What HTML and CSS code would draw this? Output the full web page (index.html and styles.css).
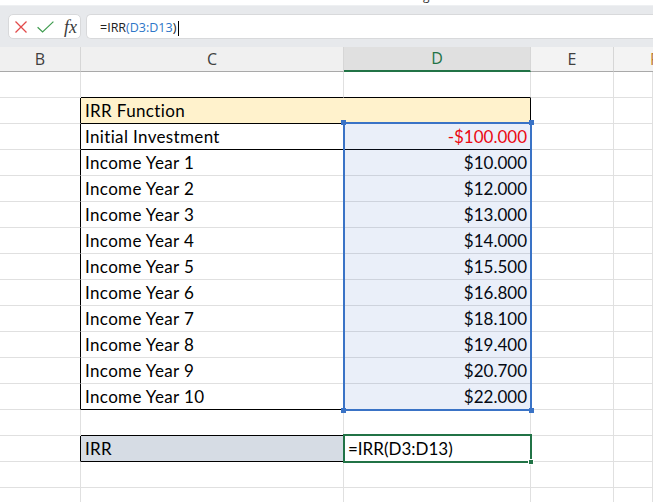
FILE: index.html
```html
<!DOCTYPE html>
<html>
<head>
<meta charset="utf-8">
<link rel="stylesheet" href="styles.css">
</head>
<body>
<div class="top"><span class="top-glyph">g</span></div>
<div class="toolbar">
  <div class="fxbox">
    <svg class="ic-x" width="12" height="12" viewBox="0 0 12 12"><path d="M0.5 0.5 L11.5 11.5 M11.5 0.5 L0.5 11.5" stroke="#e24a4a" stroke-width="1.3" fill="none"/></svg>
    <svg class="ic-ok" width="17" height="12" viewBox="0 0 17 12"><path d="M0.6 6.2 L5.6 11 L16.4 0.6" stroke="#3f9c4f" stroke-width="1.2" fill="none"/></svg>
    <span class="fx">fx</span>
  </div>
  <div class="formula"><span>=IRR</span><span class="ref">(D3:D13</span><span>)</span><span class="caret"></span></div>
</div>
<div class="colheads">
  <div class="h">B</div>
  <div class="h">C</div>
  <div class="h sel-h">D</div>
  <div class="h light">E</div>
  <div class="h light fcol">F</div>
</div>
<div class="sheet">
  <!-- row 1 -->
  <div class="c"></div><div class="c bk-b"></div><div class="c bk-b"></div><div class="c"></div><div class="c"></div>
  <!-- row 2 -->
  <div class="c bk-r"></div><div class="c lbl title bk-b bk-r">IRR Function</div><div class="c"></div><div class="c"></div>
  <!-- row 3 -->
  <div class="c bk-r"></div><div class="c lbl bk-b">Initial Investment</div><div class="c num neg bk-b bk-r">-$100.000</div><div class="c"></div><div class="c"></div>
  <!-- rows 4-12 -->
  <div class="c bk-r"></div><div class="c lbl">Income Year 1</div><div class="c num bk-r">$10.000</div><div class="c"></div><div class="c"></div>
  <div class="c bk-r"></div><div class="c lbl">Income Year 2</div><div class="c num bk-r">$12.000</div><div class="c"></div><div class="c"></div>
  <div class="c bk-r"></div><div class="c lbl">Income Year 3</div><div class="c num bk-r">$13.000</div><div class="c"></div><div class="c"></div>
  <div class="c bk-r"></div><div class="c lbl">Income Year 4</div><div class="c num bk-r">$14.000</div><div class="c"></div><div class="c"></div>
  <div class="c bk-r"></div><div class="c lbl">Income Year 5</div><div class="c num bk-r">$15.500</div><div class="c"></div><div class="c"></div>
  <div class="c bk-r"></div><div class="c lbl">Income Year 6</div><div class="c num bk-r">$16.800</div><div class="c"></div><div class="c"></div>
  <div class="c bk-r"></div><div class="c lbl">Income Year 7</div><div class="c num bk-r">$18.100</div><div class="c"></div><div class="c"></div>
  <div class="c bk-r"></div><div class="c lbl">Income Year 8</div><div class="c num bk-r">$19.400</div><div class="c"></div><div class="c"></div>
  <div class="c bk-r"></div><div class="c lbl">Income Year 9</div><div class="c num bk-r">$20.700</div><div class="c"></div><div class="c"></div>
  <!-- row 13 -->
  <div class="c bk-r"></div><div class="c lbl bk-b">Income Year 10</div><div class="c num bk-b bk-r">$22.000</div><div class="c"></div><div class="c"></div>
  <!-- row 14 -->
  <div class="c"></div><div class="c bk-b"></div><div class="c"></div><div class="c"></div><div class="c"></div>
  <!-- row 15 -->
  <div class="c bk-r"></div><div class="c lbl irr bk-b">IRR</div><div class="c">=IRR(D3:D13)</div><div class="c"></div><div class="c"></div>
  <!-- row 16-17 -->
  <div class="c"></div><div class="c"></div><div class="c"></div><div class="c"></div><div class="c"></div>
  <div class="c"></div><div class="c"></div><div class="c"></div><div class="c"></div><div class="c"></div>

  <div class="range">
    <span class="hd tl"></span><span class="hd tr"></span><span class="hd bl"></span><span class="hd br"></span>
  </div>
  <div class="active"><span class="fill-handle"></span></div>
</div>
</body>
</html>
```
FILE: styles.css
```css
html, body {
  margin: 0;
  padding: 0;
}
body {
  width: 653px;
  height: 502px;
  overflow: hidden;
  background: #ffffff;
  font-family: Lato, "Liberation Sans", sans-serif;
}
.top {
  height: 5px;
  overflow: hidden;
  padding-left: 423px;
  background: #ffffff;
}
.top-glyph {
  display: block;
  font-family: "Open Sans", sans-serif;
  font-size: 12px;
  line-height: 12px;
  margin-top: -10px;
  color: #333;
}
.toolbar {
  height: 42px;
  box-sizing: border-box;
  background: #e7e9ec;
  border-top: 1px solid #eef0f2;
  padding: 8px 0 0 8px;
  display: flex;
  align-items: flex-start;
  gap: 5px;
}
.fxbox {
  width: 73px;
  height: 25px;
  box-sizing: border-box;
  background: #ffffff;
  border: 1px solid #d8d9db;
  border-radius: 5px;
  display: flex;
  align-items: center;
  padding-left: 6px;
  gap: 9px;
}
.ic-x { margin-top: 1px; }
.ic-ok { margin-top: 1px; margin-left: 1px; }
.fx {
  font-family: "Liberation Serif", serif;
  font-style: italic;
  font-size: 18px;
  color: #3a3a3a;
  margin-left: 1px;
  line-height: 20px;
}
.formula {
  flex: 1;
  height: 25px;
  box-sizing: border-box;
  background: #ffffff;
  border: 1px solid #d8d9db;
  border-right: none;
  border-radius: 5px 0 0 5px;
  padding: 2px 0 0 13px;
  font-family: "Open Sans", sans-serif;
  font-size: 12.5px;
  line-height: 22px;
  color: #222;
  white-space: nowrap;
}
.formula .ref { color: #2e76c8; }
.caret {
  display: inline-block;
  width: 0;
  height: 15px;
  border-left: 1px solid #000;
  margin-left: 2px;
  vertical-align: -4px;
}
.colheads {
  display: grid;
  grid-template-columns: 81px 263px 187px 83px 1fr;
  height: 25px;
}
.h {
  box-sizing: border-box;
  background: #f0f0f0;
  border-right: 1px solid #d6d6d6;
  border-bottom: 1px solid #a9a9a9;
  text-align: center;
  font-family: "Open Sans", sans-serif;
  font-size: 16px;
  line-height: 24px;
  color: #404040;
}
.h.light { background: #f3f3f3; }
.h.sel-h {
  background: #e0e0e0;
  border-bottom: 2px solid #217346;
  color: #217346;
  line-height: 23px;
}
.h.fcol {
  text-align: left;
  padding-left: 36px;
  color: #c07a30;
}
.sheet {
  position: relative;
  display: grid;
  grid-template-columns: 81px 263px 187px 83px 1fr;
  grid-auto-rows: 26px;
}
.c {
  box-sizing: border-box;
  border-right: 1px solid #e0e0e0;
  border-bottom: 1px solid #e0e0e0;
  display: flex;
  align-items: flex-end;
  padding: 0 3px 2px 4px;
  font-size: 17px;
  line-height: 20px;
  color: #000;
  white-space: nowrap;
}
.c.lbl { letter-spacing: 0.35px; }
.c.bk-b { border-bottom-color: #000; }
.c.bk-r { border-right-color: #000; }
.c.num { justify-content: flex-end; }
.c.neg { color: #ff0000; }
.c.title {
  grid-column: span 2;
  background: #fff2cc;
}
.c.irr { background: #d6dce4; }
.range {
  position: absolute;
  left: 343px;
  top: 50px;
  width: 189px;
  height: 289px;
  box-sizing: border-box;
  border: 2px solid #3a73c6;
  background: rgba(50, 100, 200, 0.1);
}
.hd {
  position: absolute;
  width: 5px;
  height: 5px;
  background: #3a73c6;
}
.hd.tl { left: -4px; top: -4px; }
.hd.tr { right: -4px; top: -4px; }
.hd.bl { left: -4px; bottom: -4px; }
.hd.br { right: -4px; bottom: -4px; }
.active {
  position: absolute;
  left: 343px;
  top: 362px;
  width: 189px;
  height: 29px;
  box-sizing: border-box;
  border: 2px solid #217346;
}
.fill-handle {
  position: absolute;
  right: -4px;
  bottom: -4px;
  width: 4px;
  height: 4px;
  background: #217346;
  border: 1px solid #ffffff;
}
```
